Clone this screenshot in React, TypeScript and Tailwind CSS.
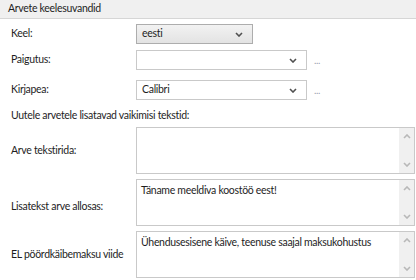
import React from "react";

// Invoice language settings panel (Windows-style form)

function Chevron({ className = "" }: { className?: string }) {
  return (
    <svg width="8" height="5" viewBox="0 0 8 5" className={className}>
      <path d="M1 1 L4 4 L7 1" fill="none" stroke="currentColor" strokeWidth="1.6" />
    </svg>
  );
}

function Select({ value, width, gray }: { value: string; width: string; gray?: boolean }) {
  return (
    <div
      className={`flex h-[20px] items-center justify-between border pl-[5px] pr-[9px] ${width} ${
        gray
          ? "border-[#adadad] bg-gradient-to-b from-[#f2f2f2] to-[#e3e3e3]"
          : "border-[#c9c9c9] bg-white"
      }`}
    >
      <span>{value}</span>
      <Chevron className="text-[#505050]" />
    </div>
  );
}

function TextBox({ text }: { text?: string }) {
  return (
    <div className="flex h-[47px] w-[279px] border border-[#c9c9c9] bg-white">
      <div className="flex-1 px-[4px] pt-[3px] leading-[15px]">{text}</div>
      <div className="flex w-[15px] flex-col items-center justify-between bg-[#f0f0f0] py-[6px] text-[#b8b8b8]">
        <Chevron className="rotate-180" />
        <Chevron />
      </div>
    </div>
  );
}

function Row({
  label,
  children,
  className = "",
  labelClass = "",
}: {
  label: string;
  children: React.ReactNode;
  className?: string;
  labelClass?: string;
}) {
  return (
    <div className={`flex items-center ${className}`}>
      <div className={`w-[136px] shrink-0 whitespace-nowrap pl-[11px] ${labelClass}`}>{label}</div>
      {children}
    </div>
  );
}

export default function App() {
  return (
    <div
      className="h-[280px] w-[416px] overflow-hidden bg-white text-[10.5px] text-[#1e1e1e]"
      style={{ fontFamily: "Lato, sans-serif", letterSpacing: "-0.3px" }}
    >
      <div className="flex h-[19px] items-center border-b border-[#d6d6d6] bg-[#f0f0f0] pl-[8px]">
        Arvete keelesuvandid
      </div>
      <Row label="Keel:" className="mt-[5px]">
        <Select value="eesti" width="w-[117px]" gray />
      </Row>
      <Row label="Paigutus:" className="mt-[6px]">
        <Select value="" width="w-[171px]" />
        <span className="ml-[7px] text-[10px] text-[#9aa0b0]">...</span>
      </Row>
      <Row label="Kirjapea:" className="mt-[10px]">
        <Select value="Calibri" width="w-[171px]" />
        <span className="ml-[7px] text-[10px] text-[#9aa0b0]">...</span>
      </Row>
      <div className="mt-[7px] pl-[11px] leading-[16px]">Uutele arvetele lisatavad vaikimisi tekstid:</div>
      <Row label="Arve tekstirida:" className="mt-[4px]">
        <TextBox />
      </Row>
      <Row label="Lisatekst arve allosas:" className="mt-[5px]" labelClass="pt-[8px]">
        <TextBox text="Täname meeldiva koostöö eest!" />
      </Row>
      <Row label="EL pöördkäibemaksu viide" className="mt-[5px]">
        <TextBox text="Ühendusesisene käive, teenuse saajal maksukohustus" />
      </Row>
    </div>
  );
}
